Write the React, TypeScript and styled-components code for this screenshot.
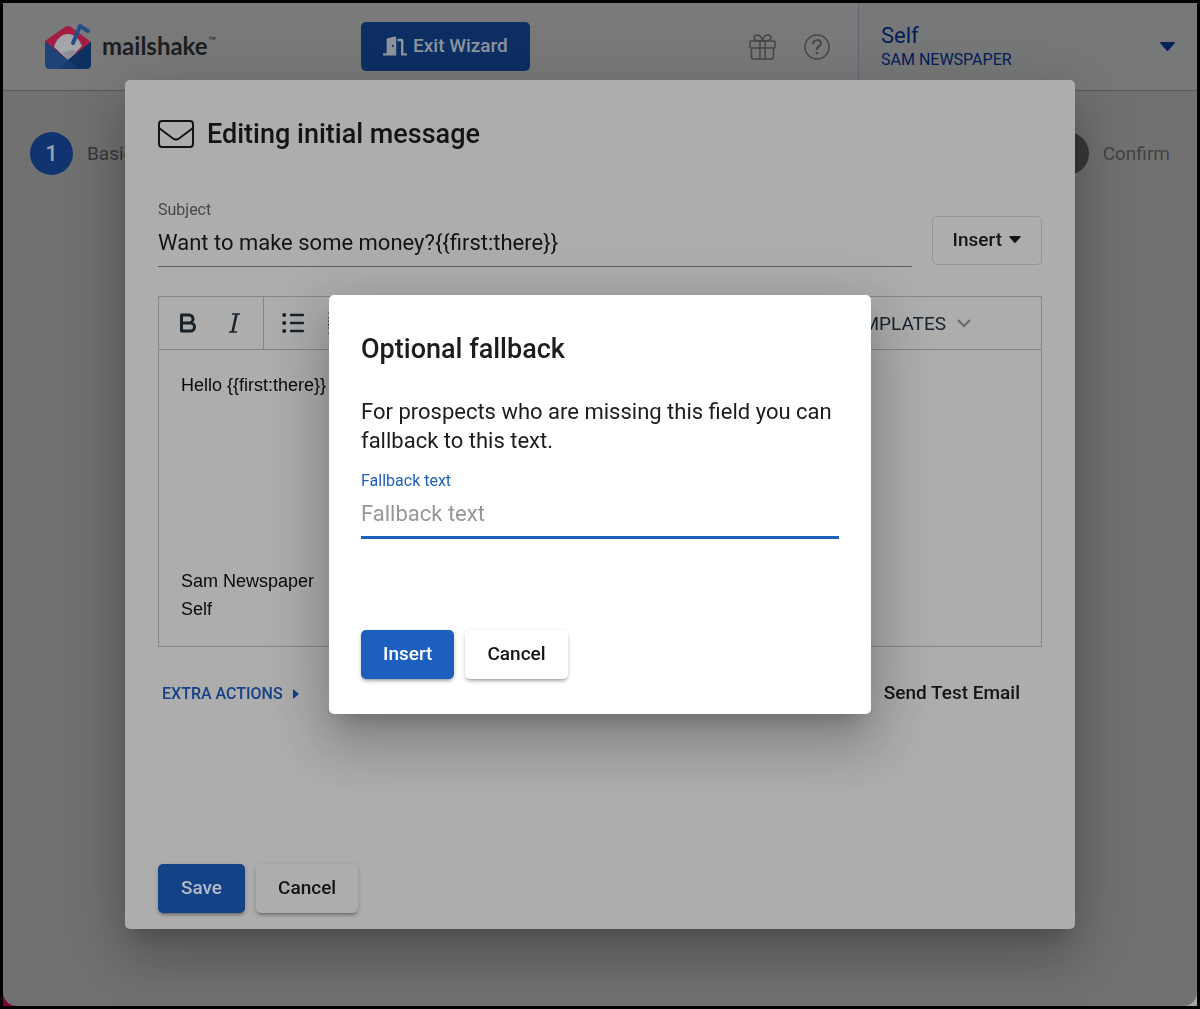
import React from 'react';
import styled, { createGlobalStyle, css } from 'styled-components';
import { FaDoorOpen } from 'react-icons/fa';

const GlobalStyle = createGlobalStyle`
  *, *::before, *::after { box-sizing: border-box; }
  body {
    margin: 0;
    background: #000;
    font-family: Roboto, "Liberation Sans", sans-serif;
    color: #141414;
  }
  button, input, textarea { font: inherit; color: inherit; margin: 0; }
  h1, h2, p { margin: 0; }
  svg { display: block; flex: none; }
`;

const Frame = styled.div`
  min-height: 100vh;
  display: flex;
  border: 3px solid #000;
  background: linear-gradient(to right, #7a0638 50%, #a6a6a6 50%);
`;

const Page = styled.div`
  flex: 1;
  min-width: 0;
  background: #717171;
  border-radius: 0 0 14px 14px;
`;

const Header = styled.header`
  display: flex;
  height: 88px;
  background: #7a7a7a;
  border-bottom: 1px solid #555a59;
`;

const HeaderMain = styled.div`
  flex: 1;
  display: flex;
  align-items: center;
  padding: 0 28px 0 41px;
`;

const Brand = styled.a`
  display: flex;
  align-items: center;
  gap: 10px;
  width: 317px;
  color: #1c1e1f;
  text-decoration: none;
  font: 700 24px/28px Lato, sans-serif;
`;

const BrandName = styled.span`
  display: flex;
  padding-bottom: 2px;
`;

const Trademark = styled.span`
  font: 400 8px/16px "Liberation Sans", sans-serif;
`;

const HeaderIcons = styled.div`
  display: flex;
  gap: 28px;
  margin-left: auto;
`;

const IconButton = styled.button`
  padding: 0;
  border: 0;
  background: none;
  color: #474747;
`;

const Account = styled.button`
  display: flex;
  align-items: center;
  justify-content: space-between;
  width: 339px;
  padding: 0 22px;
  border: 0;
  border-left: 1px solid #606778;
  background: #777878;
  color: #02205c;
  text-align: left;
`;

const AccountText = styled.span`
  display: flex;
  flex-direction: column;
  font-size: 16px;
  line-height: 22px;
`;

const AccountTeam = styled.span`
  font-size: 22px;
  line-height: 26px;
`;

const Steps = styled.ol`
  display: flex;
  justify-content: space-between;
  margin: 0;
  padding: 41px 27px;
  list-style: none;
`;

const Step = styled.li<{ $active?: boolean }>`
  display: flex;
  align-items: center;
  gap: 14px;
  font-size: 19px;
  line-height: 24px;
  color: ${p => (p.$active ? '#33383c' : '#434343')};
`;

const StepDot = styled.span<{ $active?: boolean }>`
  display: flex;
  align-items: center;
  justify-content: center;
  width: 43px;
  height: 43px;
  border-radius: 50%;
  font-size: 22px;
  font-weight: 500;
  color: #98a0ac;
  background: ${p => (p.$active ? '#10346f' : '#383838')};
`;

const Layer = styled.div`
  position: fixed;
  inset: 0;
  display: flex;
  align-items: center;
  justify-content: center;
  padding: 20px;
`;

const Dialog = styled.section<{ $width: number; $front?: boolean }>`
  width: 100%;
  max-width: ${p => p.$width}px;
  padding: ${p => (p.$front ? '32px 32px 35px' : '32px 33px 16px')};
  border-radius: 5px;
  background: ${p => (p.$front ? '#fff' : '#adadad')};
  box-shadow: 0 15px 20px -10px rgba(0, 0, 0, 0.2), 0 33px 52px 4px rgba(0, 0, 0, 0.14),
    0 12px 62px 11px rgba(0, 0, 0, 0.12);
`;

const titleText = css`
  font-size: 27px;
  font-weight: 500;
  line-height: 44px;
`;

const Title = styled.h1`
  ${titleText}
  display: flex;
  align-items: center;
  gap: 13px;
  margin-bottom: 44px;
`;

const DialogTitle = styled.h2`
  ${titleText}
  margin-bottom: 26px;
  color: #1c1c1f;
`;

const Button = styled.button<{ $kind?: 'primary' | 'raised' | 'outlined' | 'text'; $dim?: boolean }>`
  display: inline-flex;
  align-items: center;
  justify-content: center;
  gap: 6px;
  height: 49px;
  min-width: 87px;
  padding: 0 22px 2px;
  border: 0;
  border-radius: 5px;
  background: transparent;
  font-size: 19px;
  font-weight: 500;
  white-space: nowrap;
  ${p =>
    p.$kind === 'primary' &&
    css`
      background: ${p.$dim ? '#134286' : '#1d5fbf'};
      color: ${p.$dim ? '#b4bcc8' : '#fff'};
    `}
  ${p =>
    (p.$kind === 'primary' || p.$kind === 'raised') &&
    css`
      box-shadow: 0 4px 2px -3px rgba(0, 0, 0, 0.2), 0 3px 3px rgba(0, 0, 0, 0.14),
        0 1px 5px rgba(0, 0, 0, 0.12);
    `}
  ${p => p.$kind === 'outlined' && css`
    gap: 7px;
    padding: 0 20px 2px;
    border: 1px solid #949494;
  `}
`;

const ExitButton = styled(Button)`
  background: #0d2f64;
  color: #8f959e;
`;

const ButtonRow = styled.div`
  display: flex;
  gap: 11px;
`;

const SubjectRow = styled.div`
  display: flex;
  align-items: flex-end;
  gap: 20px;
  margin-bottom: 29px;

  & > button { margin-bottom: 2px; }
`;

const Field = styled.label<{ $focused?: boolean }>`
  flex: 1;
  display: block;
  min-width: 0;
  font-size: 16px;
  line-height: 20px;
  color: ${p => (p.$focused ? '#1d5fb8' : '#474747')};
`;

const TextInput = styled.input<{ $focused?: boolean }>`
  display: block;
  width: 100%;
  height: ${p => (p.$focused ? '48px' : '47px')};
  padding: 0 0 1px;
  border: 0;
  border-bottom: ${p => (p.$focused ? '3px solid #1d5fb8' : '1px solid #5c5c5c')};
  border-radius: 0;
  outline: 0;
  background: transparent;
  font-size: 22px;
  color: #141414;

  &::placeholder { color: #979797; opacity: 1; }
`;

const Editor = styled.div`
  border: 1px solid #858585;
  margin-bottom: 22px;
`;

const Toolbar = styled.div`
  display: flex;
  align-items: stretch;
  height: 53px;
  border-bottom: 1px solid #858585;
  color: #18222b;
`;

const ToolGroup = styled.div`
  display: flex;
  padding: 0 6px;

  & + & { border-left: 1px solid #858585; }
`;

const ToolButton = styled.button`
  display: flex;
  align-items: center;
  justify-content: center;
  width: 46px;
  padding: 0;
  border: 0;
  background: none;
`;

const TemplatesButton = styled.button`
  display: flex;
  align-items: center;
  gap: 11px;
  margin-left: auto;
  padding: 0 70px 0 22px;
  border: 0;
  background: none;
  font-size: 19px;
`;

const Message = styled.textarea`
  display: block;
  width: 100%;
  padding: 21px 22px 23px;
  border: 0;
  outline: 0;
  resize: none;
  overflow: hidden;
  background: transparent;
  font: 18px/28px "Liberation Sans", Arial, sans-serif;
  color: #0a0a0a;
`;

const Actions = styled.div`
  display: flex;
  align-items: center;
  justify-content: space-between;
  margin-bottom: 146px;
`;

const ExtraActions = styled.button`
  display: flex;
  align-items: center;
  gap: 10px;
  padding: 0 4px;
  border: 0;
  background: none;
  font-size: 16px;
  font-weight: 500;
  color: #134287;
`;

const Copy = styled.p`
  margin-bottom: 16px;
  font-size: 22px;
  line-height: 29px;
  color: #1c1c1f;
`;

const FallbackField = styled.div`
  margin-bottom: 91px;
`;

const Logo = () => (
  <svg width="48" height="47" viewBox="0 0 48 47" aria-hidden="true">
    <path d="M1 18 21 4q3-2 6 0l20 15-18 18H14Z" fill="#a31c42" />
    <path d="M10 24c2-7 7-13 14-13 7 0 11 5 14 12L24 37Z" fill="#a4a5ab" />
    <path d="M18 29c5 1 8-3 12-2l2 3-8 7Z" fill="#8d8f97" />
    <path d="M1 18 24 37 47 19v22q0 5-5 5H6q-5 0-5-5Z" fill="#1d4377" />
    <path d="M24 37 47 19v22q0 5-5 5h-7Z" fill="#0f3160" />
    <path d="m24 37-9 9h20Z" fill="#173b70" />
    <path d="m29 20 7-17 8 5" fill="none" stroke="#214e85" strokeWidth="4" strokeLinecap="round" strokeLinejoin="round" />
  </svg>
);

const GiftIcon = () => (
  <svg width="27" height="26" viewBox="0 0 27 26" fill="none" stroke="currentColor" strokeWidth="1.5" strokeLinejoin="round" aria-hidden="true">
    <rect x="1" y="7" width="25" height="7" rx="1" />
    <path d="M2.500 14v9q0 2 2 2h18q2 0 2-2v-9M11 7v18M16 7v18" />
    <path d="M13.500 7C7 7 5 6 5 4c0-4 7-5 8.500 3ZM13.500 7C20 7 22 6 22 4c0-4-7-5-8.500 3Z" />
  </svg>
);

const HelpIcon = () => (
  <svg width="26" height="26" viewBox="0 0 26 26" fill="none" stroke="currentColor" aria-hidden="true">
    <circle cx="13" cy="13" r="12" strokeWidth="1.500" />
    <path d="M9 10c0-5 8-5 8-1 0 3-4 3-4 6v1" strokeWidth="2" />
    <circle cx="13" cy="19" r="1.300" fill="currentColor" stroke="none" />
  </svg>
);

const Caret = ({ width, height }: { width: number; height: number }) => (
  <svg width={width} height={height} viewBox="0 0 14 8" preserveAspectRatio="none" aria-hidden="true">
    <path d="M1 0h12q1 0 .6 1L8 7.400q-1 1-2 0L.4 1Q0 0 1 0Z" fill="currentColor" />
  </svg>
);

const EnvelopeIcon = () => (
  <svg width="36" height="28" viewBox="0 0 36 28" fill="none" stroke="currentColor" strokeWidth="2" strokeLinejoin="round" aria-hidden="true">
    <rect x="1" y="1" width="34" height="26" rx="3" />
    <path d="m1 8 14 10.500q3 2 6 0L35 8" />
  </svg>
);

const BoldIcon = () => (
  <svg width="18" height="20" viewBox="0 0 18 20" fill="none" stroke="currentColor" strokeWidth="3" strokeLinejoin="round" aria-hidden="true">
    <path d="M2.500 2h7.500a4 4 0 0 1 0 8H2.500ZM2.500 10h9a4 4 0 0 1 0 8h-9Z" />
  </svg>
);

const ItalicIcon = () => (
  <svg width="13" height="20" viewBox="0 0 13 20" fill="none" stroke="currentColor" aria-hidden="true">
    <path d="M4 1h8M1 19h8" strokeWidth="1.500" />
    <path d="M8.500 1 4.500 19" strokeWidth="2.500" />
  </svg>
);

const BulletListIcon = () => (
  <svg width="22" height="20" viewBox="0 0 22 20" aria-hidden="true">
    <g fill="currentColor">
      <circle cx="2.200" cy="2" r="2" />
      <circle cx="2.200" cy="10" r="2" />
      <circle cx="2.200" cy="18" r="2" />
    </g>
    <path d="M9 2h12M9 10h12M9 18h12" stroke="currentColor" strokeWidth="2.400" strokeLinecap="round" />
  </svg>
);

const NumberListIcon = () => (
  <svg width="22" height="22" viewBox="0 0 22 22" fill="none" stroke="currentColor" aria-hidden="true">
    <path d="M0 1h2v5M0 6h4M0 9h4l-4 4h4M0 16h4v5H0M1 18.500h3" strokeWidth="1" />
    <path d="M9 3h12M9 11h12M9 19h12" strokeWidth="2.400" strokeLinecap="round" />
  </svg>
);

const ChevronIcon = () => (
  <svg width="14" height="9" viewBox="0 0 14 9" fill="none" stroke="#686868" strokeWidth="2" aria-hidden="true">
    <path d="m1 1 6 6 6-6" />
  </svg>
);

const ArrowRight = () => (
  <svg width="6" height="10" viewBox="0 0 6 10" aria-hidden="true">
    <path d="M0 0 6 5 0 10Z" fill="currentColor" />
  </svg>
);

const message = 'Hello {{first:there}}' + '\n'.repeat(7) + 'Sam Newspaper\nSelf';

export default function App() {
  return (
    <>
      <GlobalStyle />
      <Frame>
        <Page>
          <Header>
            <HeaderMain>
              <Brand href="#">
                <Logo />
                <BrandName>mailshake<Trademark>™</Trademark></BrandName>
              </Brand>
              <ExitButton type="button">
                <FaDoorOpen size={24} />
                Exit Wizard
              </ExitButton>
              <HeaderIcons>
                <IconButton type="button" aria-label="Rewards"><GiftIcon /></IconButton>
                <IconButton type="button" aria-label="Help"><HelpIcon /></IconButton>
              </HeaderIcons>
            </HeaderMain>
            <Account type="button">
              <AccountText>
                <AccountTeam>Self</AccountTeam>
                SAM NEWSPAPER
              </AccountText>
              <Caret width={15} height={9} />
            </Account>
          </Header>
          <Steps>
            <Step $active><StepDot $active>1</StepDot>Basics</Step>
            <Step><StepDot />Confirm</Step>
          </Steps>
        </Page>
      </Frame>

      <Layer>
        <Dialog $width={950} role="dialog" aria-labelledby="editing-title">
          <Title id="editing-title"><EnvelopeIcon />Editing initial message</Title>
          <SubjectRow>
            <Field>
              Subject
              <TextInput type="text" defaultValue="Want to make some money?{{first:there}}" />
            </Field>
            <Button type="button" $kind="outlined">Insert<Caret width={12} height={7} /></Button>
          </SubjectRow>
          <Editor>
            <Toolbar>
              <ToolGroup>
                <ToolButton type="button" aria-label="Bold"><BoldIcon /></ToolButton>
                <ToolButton type="button" aria-label="Italic"><ItalicIcon /></ToolButton>
              </ToolGroup>
              <ToolGroup>
                <ToolButton type="button" aria-label="Bulleted list"><BulletListIcon /></ToolButton>
                <ToolButton type="button" aria-label="Numbered list"><NumberListIcon /></ToolButton>
              </ToolGroup>
              <TemplatesButton type="button">TEMPLATES<ChevronIcon /></TemplatesButton>
            </Toolbar>
            <Message rows={9} aria-label="Message" defaultValue={message} />
          </Editor>
          <Actions>
            <ExtraActions type="button">EXTRA ACTIONS<ArrowRight /></ExtraActions>
            <Button type="button" $kind="text">Send Test Email</Button>
          </Actions>
          <ButtonRow>
            <Button type="button" $kind="primary" $dim>Save</Button>
            <Button type="button" $kind="raised">Cancel</Button>
          </ButtonRow>
        </Dialog>
      </Layer>

      <Layer>
        <Dialog $width={542} $front role="dialog" aria-modal="true" aria-labelledby="fallback-title">
          <DialogTitle id="fallback-title">Optional fallback</DialogTitle>
          <Copy>For prospects who are missing this field you can fallback to this text.</Copy>
          <FallbackField>
            <Field $focused>
              Fallback text
              <TextInput $focused type="text" placeholder="Fallback text" />
            </Field>
          </FallbackField>
          <ButtonRow>
            <Button type="button" $kind="primary">Insert</Button>
            <Button type="button" $kind="raised">Cancel</Button>
          </ButtonRow>
        </Dialog>
      </Layer>
    </>
  );
}
